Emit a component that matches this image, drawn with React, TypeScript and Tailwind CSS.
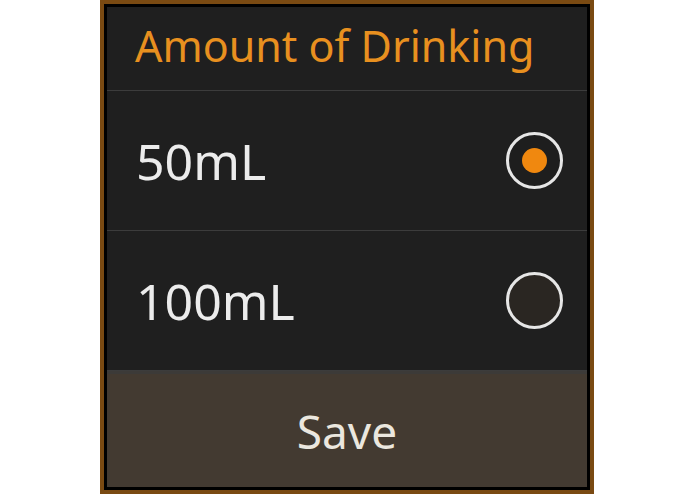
import React from "react";

function Radio({ checked }: { checked: boolean }) {
  return (
    <div
      className={
        "w-[57px] h-[57px] rounded-full border-[3px] border-[#e6e6e6] flex items-center justify-center " +
        (checked ? "bg-[#1e1e1e]" : "bg-[#2a2622]")
      }
    >
      {checked && <div className="w-[25px] h-[25px] rounded-full bg-[#f0880f]" />}
    </div>
  );
}

export default function App() {
  const rows = [
    { label: "50mL", checked: true },
    { label: "100mL", checked: false },
  ];
  return (
    <div className="w-[695px] h-[494px] bg-white flex justify-start pl-[100px]" style={{ fontFamily: '"Noto Sans", "Open Sans", sans-serif' }}>
      <div className="w-[494px] h-[494px] bg-[#7a4a12] p-[4px]">
        <div className="w-full h-full bg-black p-[3px]">
          <div className="w-full h-full bg-[#1f1f1f] flex flex-col">
            <div className="h-[84px] flex items-center pl-[28px] border-b border-[#3c3c3c]">
              <span className="text-[43px] leading-none text-[#e8901f] pb-[6px]">Amount of Drinking</span>
            </div>
            {rows.map((r) => (
              <div key={r.label} className="h-[140px] flex items-center justify-between pl-[29px] pr-[24px] border-b border-[#3c3c3c]">
                <span className="text-[50px] leading-none text-[#ececec]">{r.label}</span>
                <Radio checked={r.checked} />
              </div>
            ))}
            <div className="flex-1 bg-[#433a31] border-t-[3px] border-[#3c3a38] flex items-center justify-center">
              <span className="text-[46px] leading-none text-[#ebe7df]">Save</span>
            </div>
          </div>
        </div>
      </div>
    </div>
  );
}
